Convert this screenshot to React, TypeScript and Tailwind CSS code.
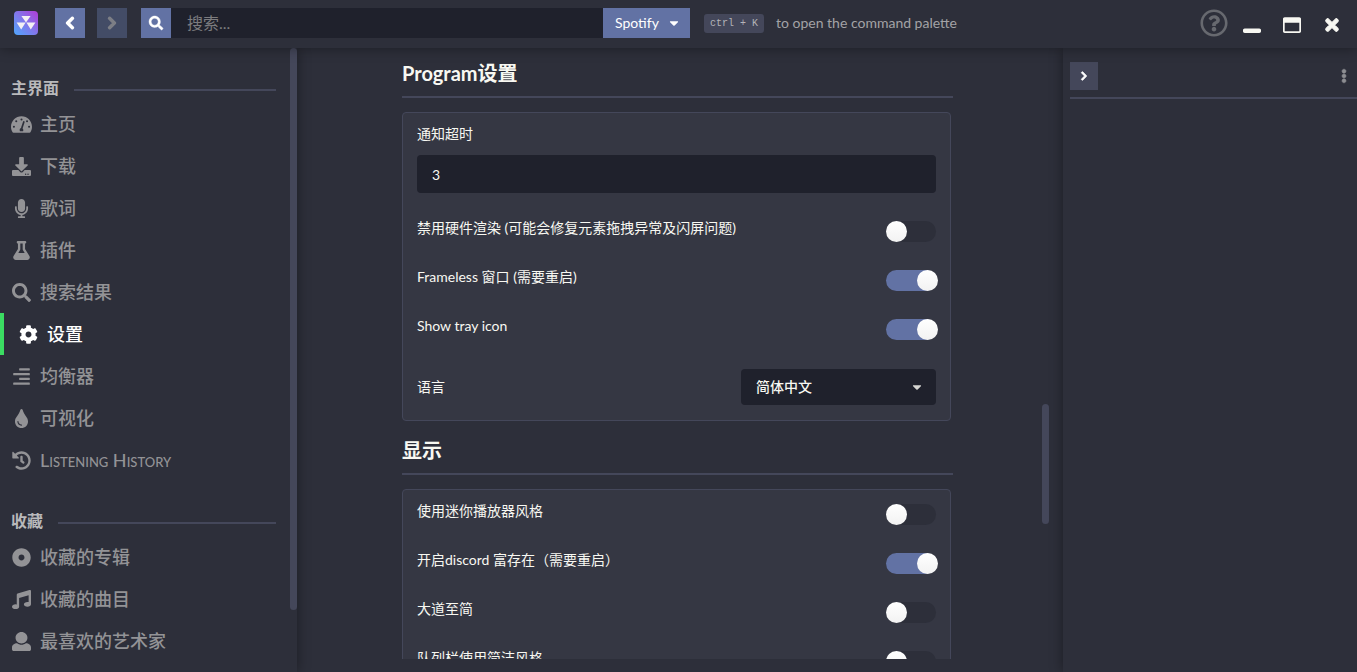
import { useState } from 'react';
import type { ReactNode } from 'react';
import {
  FaAlignRight,
  FaCaretDown,
  FaChevronLeft,
  FaChevronRight,
  FaCog,
  FaDotCircle,
  FaDownload,
  FaEllipsisV,
  FaFlask,
  FaHistory,
  FaMicrophone,
  FaMusic,
  FaRegQuestionCircle,
  FaRegWindowMaximize,
  FaSearch,
  FaTimes,
  FaTint,
  FaWindowMinimize,
} from 'react-icons/fa';

type NavEntry = {
  label: string;
  icon: React.ComponentType<{ className?: string }>;
  active?: boolean;
};

function GaugeIcon({ className }: { className?: string }) {
  return (
    <svg viewBox="0 0 576 512" className={className} fill="currentColor" aria-hidden="true">
      <path
        fillRule="evenodd"
        d="M288 32C129 32 0 161 0 320c0 53 14 102 39 145 6 9 16 15 27 15h444c11 0 21-6 27-15 25-43 39-92 39-145C576 161 447 32 288 32zm0 56a28 28 0 1 1 0 56 28 28 0 0 1 0-56zM144 140a28 28 0 1 1 0 56 28 28 0 0 1 0-56zM80 288a28 28 0 1 1 0 56 28 28 0 0 1 0-56zm416 0a28 28 0 1 1 0 56 28 28 0 0 1 0-56zm-56-148a28 28 0 1 1 0 56 28 28 0 0 1 0-56zm-83 22c13 4 20 17 16 29l-56 178c20 17 27 45 14 75H245c-21-42 1-92 43-97h-14l56-169c3-13 15-20 27-16z"
      />
    </svg>
  );
}

function PersonIcon({ className }: { className?: string }) {
  return (
    <svg viewBox="0 0 512 512" className={className} fill="currentColor" aria-hidden="true">
      <path d="M256 0c88 0 160 68 160 156s-72 152-160 152S96 244 96 156 168 0 256 0zM140 304c32 26 72 40 116 40s84-14 116-40c78 2 140 44 140 116v44c0 27-21 48-48 48H48c-27 0-48-21-48-48v-44c0-72 62-114 140-116z" />
    </svg>
  );
}

const mainMenu: NavEntry[] = [
  { label: '主页', icon: GaugeIcon },
  { label: '下载', icon: FaDownload },
  { label: '歌词', icon: FaMicrophone },
  { label: '插件', icon: FaFlask },
  { label: '搜索结果', icon: FaSearch },
  { label: '设置', icon: FaCog, active: true },
  { label: '均衡器', icon: FaAlignRight },
  { label: '可视化', icon: FaTint },
  { label: 'Listening History', icon: FaHistory },
];

const collectionMenu: NavEntry[] = [
  { label: '收藏的专辑', icon: FaDotCircle },
  { label: '收藏的曲目', icon: FaMusic },
  { label: '最喜欢的艺术家', icon: PersonIcon },
];

function Logo() {
  return (
    <svg viewBox="0 0 24 24" className="size-6 shrink-0" role="img" aria-label="Nuclear">
      <defs>
        <linearGradient id="logo-fill" x1="0" y1="1" x2="1" y2="0">
          <stop offset="0" stopColor="#4fa8ff" />
          <stop offset="0.5" stopColor="#8277ea" />
          <stop offset="1" stopColor="#b03bd6" />
        </linearGradient>
      </defs>
      <rect width="24" height="24" rx="4" fill="url(#logo-fill)" />
      <path d="M7.4 5h9.2L12 11.6zM2.6 11.6h9L7.2 18.4zM12.4 11.6h9L16.8 18.4z" fill="#f4f0f4" />
    </svg>
  );
}

function Header() {
  return (
    <header className="relative z-20 flex h-12 shrink-0 items-center bg-[#2d2f3a] pr-4 pb-0.5 pl-3.5 shadow-[0_0_12px_rgba(0,0,0,0.4)]">
      <Logo />
      <button aria-label="Back" className="ml-[17px] flex size-[30px] items-center justify-center bg-[#6272a4] text-white">
        <FaChevronLeft className="size-3.5 overflow-visible [stroke-width:44]" />
      </button>
      <button aria-label="Forward" disabled className="ml-3 flex size-[30px] items-center justify-center bg-[#434c66] text-[#7d7f86]">
        <FaChevronRight className="size-3.5 overflow-visible [stroke-width:44]" />
      </button>
      <form className="ml-3.5 flex h-[30px] w-[549px] shrink" onSubmit={(e) => e.preventDefault()}>
        <button aria-label="Search" className="flex size-[30px] shrink-0 items-center justify-center bg-[#6272a4] text-white">
          <FaSearch className="size-3.5 overflow-visible [stroke-width:16]" />
        </button>
        <input
          aria-label="搜索"
          placeholder="搜索..."
          className="min-w-0 flex-1 bg-[#1f212c] px-4 text-base text-white outline-none placeholder:text-[#7c7c7f]"
        />
        <button type="button" className="flex w-[87px] shrink-0 items-center justify-between bg-[#6272a4] pr-[9px] pl-3 text-sm text-white">
          Spotify
          <FaCaretDown className="size-3.5" />
        </button>
      </form>
      <kbd className="ml-3.5 flex h-[19px] shrink-0 items-center rounded-[3px] bg-[#44475a] px-1.5 font-['Liberation_Mono',monospace] text-[10px] text-[#b4b4b8]">
        ctrl + K
      </kbd>
      <span className="ml-3 text-sm whitespace-nowrap text-[#a3a3a6]">to open the command palette</span>
      <div className="ml-auto flex items-center text-[#f8f8f2]">
        <button aria-label="Help" className="mr-[15px] text-[#67696f]">
          <FaRegQuestionCircle className="size-7" />
        </button>
        <div className="flex gap-[22px] pt-1">
          <button aria-label="Minimize">
            <FaWindowMinimize className="size-[18px]" />
          </button>
          <button aria-label="Maximize">
            <FaRegWindowMaximize className="size-[18px]" />
          </button>
          <button aria-label="Close">
            <FaTimes className="size-[18px] overflow-visible [stroke-width:36]" />
          </button>
        </div>
      </div>
    </header>
  );
}

function NavGroup({ title, items }: { title: string; items: NavEntry[] }) {
  return (
    <section className="pt-[27px]">
      <div className="flex h-7 items-center gap-[15px] pr-3.5 pl-[11px]">
        <h2 className="pb-0.5 text-base leading-6 font-bold text-[#b9b9bb]">{title}</h2>
        <div className="mt-0.5 h-0.5 flex-1 bg-[#44475a]" />
      </div>
      <ul>
        {items.map(({ label, icon: Icon, active }) => (
          <li key={label}>
            <a
              href="#"
              aria-current={active ? 'page' : undefined}
              className={
                active
                  ? 'flex h-[42px] items-center gap-2 border-l-4 border-[#3bdc62] pl-3.5 text-lg font-medium text-white'
                  : 'flex h-[42px] items-center gap-2 pl-[11px] text-lg font-medium text-[#939396]'
              }
            >
              <span className="flex w-[21px] justify-center">
                <Icon className="h-[19px] w-auto" />
              </span>
              <span className="[font-variant:small-caps]">{label}</span>
            </a>
          </li>
        ))}
      </ul>
    </section>
  );
}

function Sidebar() {
  return (
    <aside className="relative z-10 flex w-[297px] shrink-0 bg-[#2d2f3a] shadow-[0_0_12px_rgba(0,0,0,0.4)]">
      <nav className="min-w-0 flex-1 overflow-hidden">
        <NavGroup title="主界面" items={mainMenu} />
        <NavGroup title="收藏" items={collectionMenu} />
      </nav>
      <div className="w-[7px]" aria-hidden="true">
        <div className="h-[90%] rounded bg-[#44475a]" />
      </div>
    </aside>
  );
}

function ToggleRow({ label, initial = false }: { label: string; initial?: boolean }) {
  const [on, setOn] = useState(initial);
  return (
    <label className="flex h-[21px] items-start justify-between">
      <span className="leading-[14px]">{label}</span>
      <input
        type="checkbox"
        checked={on}
        onChange={() => setOn(!on)}
        className="h-[21px] w-[50px] appearance-none rounded-full bg-[#2d2f3a] before:block before:size-[21px] before:rounded-full before:bg-linear-to-b before:from-white before:to-[#f2f2f2] before:content-[''] checked:bg-[#6272a4] checked:before:ml-[31px]"
      />
    </label>
  );
}

function Section({ title, children }: { title: string; children: ReactNode }) {
  return (
    <section>
      <h2 className="mb-3.5 h-[50px] border-b-2 border-[#44475a] pt-[11px] text-xl leading-7 font-bold">{title}</h2>
      <div className="mr-0.5 flex flex-col gap-7 rounded-[4px] border border-[#44475a] bg-[#353743] px-3.5 pt-3.5 pb-[15px]">
        {children}
      </div>
    </section>
  );
}

function Settings() {
  return (
    <main className="flex min-w-0 flex-1 pr-3.5 pb-[13px] text-sm text-[#f8f8f2]">
      <div className="min-w-0 flex-1 overflow-hidden pl-4">
        <div className="mx-auto flex w-full max-w-[551px] flex-col gap-1">
          <Section title="Program设置">
            <div className="flex flex-col gap-3.5">
              <label htmlFor="timeout" className="leading-[14px]">
                通知超时
              </label>
              <input id="timeout" defaultValue="3" className="h-[38px] rounded-[4px] bg-[#1f212c] px-[15px] outline-none" />
            </div>
            <ToggleRow label="禁用硬件渲染 (可能会修复元素拖拽异常及闪屏问题)" />
            <ToggleRow label="Frameless 窗口 (需要重启)" initial />
            <ToggleRow label="Show tray icon" initial />
            <div className="flex items-center justify-between pt-px">
              <label htmlFor="language">语言</label>
              <div className="grid w-[195px] items-center">
                <select
                  id="language"
                  className="col-start-1 row-start-1 h-9 appearance-none rounded-[4px] bg-[#1f212c] px-[15px] font-medium outline-none"
                >
                  <option>简体中文</option>
                </select>
                <FaCaretDown className="pointer-events-none col-start-1 row-start-1 mr-3 size-3.5 justify-self-end text-[#d6d6d2]" />
              </div>
            </div>
          </Section>
          <Section title="显示">
            <ToggleRow label="使用迷你播放器风格" />
            <ToggleRow label="开启discord 富存在（需要重启）" initial />
            <ToggleRow label="大道至简" />
            <ToggleRow label="队列栏使用简洁风格" />
          </Section>
        </div>
      </div>
      <div className="flex w-[7px] flex-col" aria-hidden="true">
        <div className="grow-[356]" />
        <div className="h-[120px] rounded bg-[#44475a]" />
        <div className="grow-[135]" />
      </div>
    </main>
  );
}

function QueuePanel() {
  return (
    <aside className="relative z-10 w-[294px] shrink-0 bg-[#2d2f3a] pt-3.5 pl-[7px] shadow-[0_0_12px_rgba(0,0,0,0.4)]">
      <div className="flex items-center justify-between border-b-2 border-[#44475a] pb-[7px]">
        <button aria-label="Collapse queue" className="flex size-7 items-center justify-center bg-[#44475a] text-white">
          <FaChevronRight className="size-2.5 overflow-visible [stroke-width:44]" />
        </button>
        <button aria-label="Queue menu" className="mr-1.5 text-[#8d8e92]">
          <FaEllipsisV className="size-3.5 overflow-visible [stroke-width:20]" />
        </button>
      </div>
    </aside>
  );
}

export default function App() {
  return (
    <div className="flex h-screen flex-col overflow-hidden bg-[#2d2f3a] font-[Lato,'Noto_Sans_CJK_SC',sans-serif]">
      <Header />
      <div className="flex min-h-0 flex-1">
        <Sidebar />
        <Settings />
        <QueuePanel />
      </div>
    </div>
  );
}
